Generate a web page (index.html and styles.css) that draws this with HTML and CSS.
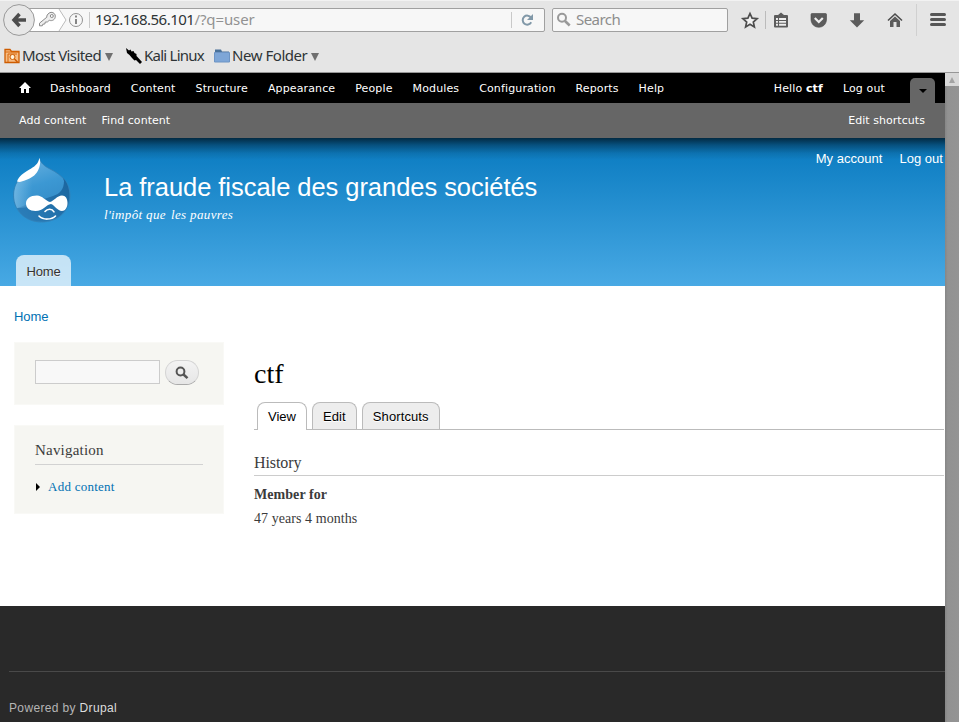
FILE: index.html
```html
<!DOCTYPE html>
<html lang="en">
<head>
<meta charset="utf-8">
<title>ctf</title>
<link rel="stylesheet" href="styles.css">
</head>
<body>
<div class="window">
  <header class="chrome">
    <div class="navbar">
      <div class="back"><svg width="32" height="32" viewBox="0 0 32 32"><circle cx="16" cy="16" r="15.4" fill="#e7e7e7" stroke="#999"/><path d="M16.500 10 11 16l5.500 6M11.500 16H23" fill="none" stroke="#4d4d4d" stroke-width="3.500"/></svg></div>
      <div class="urlbar">
        <svg class="identity" width="76" height="22" viewBox="0 0 76 22"><path d="M0 0h31l7 11-7 11H0z" fill="#fff"/><path d="m31 0 7 11-7 11" fill="none" stroke="#bbb"/><g fill="#eee" stroke="#8a8a8a"><path d="M21 4.200c2.500-2 6.300-.2 6.300 3 0 3.300-3 5.200-6 4.100l-2 1.700h-2l-.5 2-2 .2-.5 1.600h-2.800v-2.600l7.300-6c-.3-1.600.8-3 2.200-4z"/><circle cx="23.800" cy="7" r="1.500" fill="#fff"/></g><circle cx="48" cy="11" r="6.500" fill="none" stroke="#929292"/><path d="M48 6.500v2m0 1.500v5" stroke="#858585" stroke-width="2"/><path d="M61.500 3v16" stroke="#c9c9c9"/></svg>
        <span class="url">192.168.56.101<i>/?q=user</i></span>
        <svg class="reload" width="33" height="22" viewBox="0 0 33 22"><path d="M.5 3v16" stroke="#c9c9c9"/><path d="M20.200 13.200a4.500 4.500 0 1 1-.2-4.500" fill="none" stroke="#8198a8" stroke-width="2"/><path d="M22 5v6h-6z" fill="#8198a8"/></svg>
      </div>
      <div class="searchbar"><svg width="16" height="16" viewBox="0 0 16 16"><circle cx="6" cy="5.700" r="4" fill="none" stroke="#999" stroke-width="2"/><path d="m9 9 4.700 4.500" stroke="#999" stroke-width="2.600"/></svg><span>Search</span></div>
      <div class="tools">
        <svg width="229" height="38" viewBox="0 0 229 38" fill="#5c5c5c"><path d="m20 12.500 2.100 4.600 5 .5-3.800 3.400 1.100 4.900-4.400-2.600-4.400 2.600 1.100-4.900-3.800-3.400 5-.5z" fill="#f2f2f2" stroke="#4d4d4d" stroke-width="1.700"/><path d="M35.500 10v18" stroke="#bbb"/><path fill-rule="evenodd" d="M45 14h3l3-2.500 3 2.500h3q1 0 1 1v10.500q0 1-1 1H45q-1 0-1-1V15q0-1 1-1zM46 17v7.500h10V17z"/><path d="M46 17h10v7.500H46z" fill="#eee"/><path d="M48.500 17v8M46 19.500h10M46 22.200h10" stroke="#5c5c5c" stroke-width="1.100"/><path d="M81 13.500q0-1 1-1h13.500q1 0 1 1v4.500c0 11-15.500 11-15.500 0z" stroke="#484848" stroke-width=".6"/><path d="m84.800 17 4 4 4-4" fill="none" stroke="#eee" stroke-width="2.200"/><path d="M124 12.300h6v7h4.200l-7.200 7.200-7.200-7.200h4.200z"/><path d="m158 19.500 7-6.500 7 6.500" fill="none" stroke="#4d4d4d" stroke-width="1.600"/><path d="m160 20 5-4.500 5 4.500v6h-3.500v-5h-3v5H160z"/><path d="M186.500 3v32" stroke="#d0d0d0"/><path d="M201.500 13.500h13m-13 5h13m-13 5h13" stroke="#565656" stroke-width="3" stroke-linecap="round"/></svg>
      </div>
    </div>
    <div class="bookmarks">
      <span class="bm visited"><svg width="16" height="16" viewBox="0 0 16 16"><path d="M1 14.500v-13h5l1.500 2H15v11z" fill="#f6bd85" stroke="#ce5c00" stroke-width="1.300"/><path d="M1 4h14M4 14V6h9" fill="none" stroke="#d8660b"/><circle cx="8.500" cy="9" r="2.500" fill="#fff2dc" stroke="#ce5c00"/><path d="m10.500 11 3 3" stroke="#ce5c00" stroke-width="1.500"/></svg><b>Most Visited</b><em></em></span>
      <span class="bm kali"><svg width="18" height="18" viewBox="0 0 18 18"><path d="m1 1 3 2.500L5.500 2.500l1 2 2-.5 1 2 2 1v2l1 1 4.500 5-2 2-4-4-1.500.5L7 11 4.500 8 2 6z"/></svg><b>Kali Linux</b></span>
      <span class="bm folder"><svg width="16" height="16" viewBox="0 0 16 16"><path d="M1 13V1.500h6l1 2h7V13z" fill="#4a7199"/><path d="M.5 4.500h15v9.500H.5z" fill="#7ea6d7" stroke="#6d94c4"/></svg><b>New Folder</b><em></em></span>
    </div>
  </header>
  <div class="viewport">
    <div class="page">
      <nav class="admin">
        <svg width="12" height="12" viewBox="0 0 12 12"><path d="M6 0 0 6h2v5h3V7h2v4h3V6h2z" fill="#fff"/></svg>
        <a>Dashboard</a><a>Content</a><a>Structure</a><a>Appearance</a><a>People</a><a>Modules</a><a>Configuration</a><a>Reports</a><a>Help</a>
        <span class="hello">Hello <strong>ctf</strong></span><a>Log out</a><span class="toggle"></span>
      </nav>
      <nav class="shortcuts"><a>Add content</a><a>Find content</a><a class="edit">Edit shortcuts</a></nav>
      <header class="banner">
        <div class="account"><a>My account</a><a>Log out</a></div>
        <div class="brand">
          <svg class="logo" width="60" height="66" viewBox="0 0 60 66">
            <defs>
              <linearGradient id="drop" x1="0" y1="0" x2=".3" y2="1"><stop offset="0" stop-color="#6fb5e2"/><stop offset=".5" stop-color="#3c98d3"/><stop offset="1" stop-color="#3187c3"/></linearGradient>
              <linearGradient id="shade" x1="1" y1="0" x2="0" y2=".6"><stop offset="0" stop-color="#1b659e"/><stop offset="1" stop-color="#2a7cb7"/></linearGradient>
              <linearGradient id="glow" x1="0" y1="0" x2="1" y2="0"><stop offset="0" stop-color="#8cc6ea" stop-opacity=".6"/><stop offset="1" stop-color="#8cc6ea" stop-opacity="0"/></linearGradient>
            </defs>
            <path d="M27.500.500C28.500 5 33 8.500 38 11c12 6 20 14 20 26.500C58 53 46 64 29.500 64S1.500 52 1.500 37.500C1.500 26 8 18.500 17 13 23 9.500 27 7 27.500.500z" fill="url(#drop)" stroke="#3380b5" stroke-width=".8"/>
            <path d="M52 23C52 31 48 36 41 38L5 50c5 9.500 14 13.500 24.500 13.500C46 63.500 57.500 53 57.500 37.500 57.500 30 55 24 51 20z" fill="url(#shade)"/>
            <path d="M6 23C1 31 1 42 5 50l15-1V20z" fill="url(#glow)"/>
            <path d="M27.300 0C29 3 28 9 26 12.500 23 18 19 20 14 22c-4 1.500-6 2.500-9 1.500C7 18 11.500 15 17 11.800 22 9 26.500 6 27.300 0z" fill="#fff"/>
            <path d="M25 37.500c5.500 0 8.500 5.500 13 6.500 4-1 7-6.500 12-6.500 3.500 0 5.500 3 5.500 7.500s-2.500 8-5.500 8c-4.500 0-7.500-6-11-7-5 .500-7.500 7-15.500 7-6 0-9.500-3-9.500-7.500s4-8 11-8z" fill="#fff"/>
            <path d="M33 53.500c2.500-3 7-3 9 .3M27 58c4 4.200 12.500 4 16.500 0" fill="none" stroke="#fff" stroke-width="1.600" stroke-linecap="round"/>
          </svg>
          <div class="names"><h1>La fraude fiscale des grandes sociétés</h1><p>l'impôt que <span>les pauvres</span></p></div>
        </div>
        <div class="main-menu"><a>Home</a></div>
      </header>
      <div class="breadcrumb"><a>Home</a></div>
      <div class="columns">
        <aside>
          <section class="block search"><span class="field"></span><span class="button"><svg width="14" height="14" viewBox="0 0 14 14"><circle cx="5.500" cy="5.500" r="3.900" fill="none" stroke="#555" stroke-width="2"/><path d="m8.500 8.500 4 3.700" stroke="#555" stroke-width="2.500"/></svg></span></section>
          <section class="block navigation"><h2>Navigation</h2><div class="leaf"><i></i><a>Add content</a></div></section>
        </aside>
        <main>
          <h1>ctf</h1>
          <div class="tabs"><a class="active">View</a><a>Edit</a><a>Shortcuts</a></div>
          <h3>History</h3>
          <p class="label">Member for</p>
          <p class="value">47 years 4 months</p>
        </main>
      </div>
      <footer><div class="powered">Powered by <a>Drupal</a></div></footer>
    </div>
    <div class="scrollbar"><div class="up"></div></div>
  </div>
</div>
</body>
</html>
```

FILE: styles.css
```css
* { box-sizing: border-box; }
body, h1, h2, h3, p { margin: 0; font-weight: normal; }
svg { display: block; flex: none; }
.window { width: 959px; height: 722px; overflow: hidden; display: flex; flex-direction: column; }

.chrome { height: 73px; flex: none; background: #e5e5e5; border-top: 1px solid #f2f2f2; border-bottom: 1px solid #969696; font: 15px/20px "Noto Sans", sans-serif; color: #2e3436; }
.navbar { height: 38px; display: flex; align-items: center; padding-left: 3px; }
.back { width: 32px; height: 32px; z-index: 1; }
.urlbar { width: 518px; height: 24px; margin-left: -8px; border: 1px solid #a0a0a0; border-radius: 2px; background: #f7f7f7; display: flex; align-items: center; }
.urlbar .identity { margin-right: -9px; }
.url { flex: 1; white-space: nowrap; letter-spacing: -.5px; padding-bottom: 2px; }
.url i { font-style: normal; color: #929292; letter-spacing: -.1px; }
.searchbar { width: 176px; height: 24px; margin-left: 7px; border: 1px solid #a0a0a0; border-radius: 2px; background: #f7f7f7; display: flex; align-items: center; padding-left: 3px; gap: 4px; color: #8d8d8d; letter-spacing: -.55px; }
.searchbar span { padding-bottom: 2px; }
.tools { margin-left: 2px; }
.bookmarks { height: 33px; display: flex; align-items: center; padding: 1px 0 0 4px; }
.bm { display: flex; align-items: center; white-space: nowrap; gap: 2px; }
.bm b { font-weight: normal; padding-bottom: 2px; }
.bm em { width: 0; height: 0; border: 4px solid transparent; border-top: 8px solid #707070; border-bottom: 0; margin: 1px 0 0 2px; }
.visited { width: 121px; letter-spacing: -.6px; }
.kali { width: 89px; gap: 1px; letter-spacing: -.75px; }
.folder { letter-spacing: -.45px; }

.viewport { flex: 1; display: flex; min-height: 0; }
.page { width: 945px; background: #fff; display: flex; flex-direction: column; font-family: "Liberation Serif", serif; color: #3b3b3b; }
.scrollbar { width: 14px; background: linear-gradient(90deg, #868686, #929292 20%, #949494); }
.up { height: 13px; background: #d8d8d8; display: flex; justify-content: center; align-items: center; }
.up::before { content: ""; border: 3.5px solid transparent; border-bottom: 6px solid #a3a3a3; border-top: 0; }
.admin { height: 30px; background: #000; color: #fff; font: 11px/30px "DejaVu Sans", sans-serif; letter-spacing: .13px; display: flex; align-items: center; padding: 0 10px 0 19px; gap: 20px; white-space: nowrap; }
.admin a, .hello { padding-top: 1px; }
.admin svg { margin-right: -1px; }
.hello { margin-left: auto; }
.toggle { width: 25px; height: 25px; align-self: flex-end; background: #666; border-radius: 5px 5px 0 0; margin-left: 5px; display: flex; justify-content: center; align-items: center; }
.toggle::before { content: ""; border: 4px solid transparent; border-top-color: #000; border-bottom: 0; }
.shortcuts { height: 35px; background: #666; color: #fff; font: 11px/35px "DejaVu Sans", sans-serif; letter-spacing: .05px; display: flex; gap: 15px; padding: 0 20px 0 19px; }
.edit { margin-left: auto; }
.banner { height: 148px; background: linear-gradient(rgba(0,0,0,.65), rgba(0,0,0,.35) 7px, rgba(0,0,0,.1) 15px, transparent 22px), linear-gradient(#0779bf, #48a9e4); color: #fff; display: flex; flex-direction: column; font-family: "Liberation Sans", sans-serif; }
.account { height: 20px; padding: 13px 2px 0; display: flex; justify-content: flex-end; gap: 17px; font-size: 13px; line-height: 15px; letter-spacing: .03px; }
.brand { height: 97px; display: flex; padding-left: 12px; }
.names { padding: 14px 0 0 32px; }
.names h1 { font-size: 25.5px; line-height: 30px; white-space: nowrap; letter-spacing: -.05px; }
.names p { font: italic 13px/16px "Liberation Serif", serif; letter-spacing: .35px; margin-top: 5px; }
.names p span { margin-left: 1.5px; }
.main-menu { display: flex; padding-left: 16px; }
.main-menu a { width: 55px; height: 31px; padding-top: 1px; border-radius: 8px 8px 0 0; background: rgba(255,255,255,.7); color: #333; font-size: 13px; line-height: 31px; text-align: center; text-shadow: 0 1px #eee; letter-spacing: -.15px; }
.breadcrumb { height: 56px; padding: 23px 14px 0; font: 13px/15px "Liberation Sans", sans-serif; letter-spacing: -.1px; }
.breadcrumb a, .leaf a { color: #0071b3; }
.columns { height: 264px; display: flex; gap: 30px; padding-left: 14px; }
aside { width: 210px; flex: none; }
.block { background: #f6f6f2; border: 1px solid #f9f9f6; }
.search { height: 63px; padding: 17px 20px; display: flex; gap: 5px; }
.field { width: 125px; height: 24px; border: 1px solid #ccc; background: #f8f8f8; }
.button { width: 34px; height: 25px; border: 1px solid #d4d4d4; border-bottom-color: #aaa; border-radius: 13px; background: linear-gradient(#f3f3f3, #e6e6e6); display: flex; justify-content: center; align-items: center; }
.navigation { height: 89px; margin-top: 20px; padding: 14px 20px; }
.navigation h2 { font-size: 15px; line-height: 20px; height: 25px; border-bottom: 1px solid #d2d2d2; letter-spacing: .2px; }
.leaf { display: flex; align-items: center; margin-top: 13px; font-size: 13px; line-height: 17px; letter-spacing: .25px; }
.leaf i { border: 4px solid transparent; border-left-color: #000; border-right: 0; margin: 1px 8px 0 1px; }
main { flex: 1; }
main h1 { color: #000; font-size: 28px; line-height: 32px; height: 60px; padding-top: 16px; }
.tabs { height: 28px; display: flex; gap: 5px; padding-left: 3px; border-bottom: 1px solid #bbb; margin-right: 1px; font: 13px/27px "Liberation Sans", sans-serif; color: #000; }
.tabs a { height: 27px; padding: 0 10px; border: 1px solid #bbb; border-bottom: 0; border-radius: 8px 8px 0 0; background: #ededed; text-shadow: 0 1px #fff; letter-spacing: .1px; }
.tabs .active { height: 28px; width: 50px; background: #fff; letter-spacing: 0; }
main h3 { margin: 23px 1px 0 0; height: 23px; border-bottom: 1px solid #ccc; font-size: 16px; line-height: 20px; letter-spacing: -.1px; }
.label, .value { font-size: 14px; line-height: 18px; letter-spacing: .06px; }
.label { font-weight: bold; margin-top: 10px; }
.value { margin-top: 6px; }
footer { flex: 1; background: #292929; padding: 65px 0 0 9px; }
.powered { border-top: 1px solid #494949; padding-top: 28px; font: 12px/16px "Liberation Sans", sans-serif; letter-spacing: .35px; color: #b5b5b5; }
.powered a { color: #ddd; }
```
